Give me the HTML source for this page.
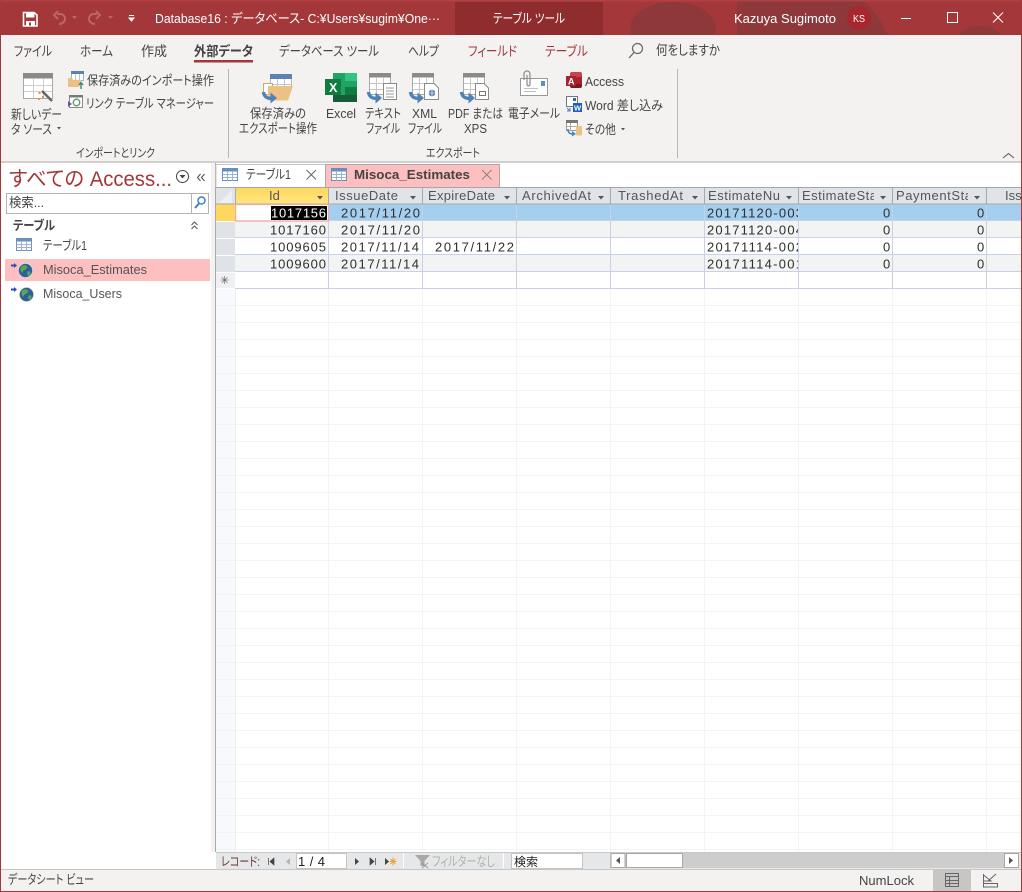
<!DOCTYPE html>
<html lang="ja"><head><meta charset="utf-8"><title>Database16</title>
<style>
html,body{margin:0;padding:0;background:#fff;overflow:hidden}
svg{display:block}
text{font-family:"Liberation Sans","Noto Sans CJK JP",sans-serif;font-size:12px;fill:#444;white-space:pre;font-feature-settings:"palt"}
.t{font-size:13.5px;fill:#444}
.w{fill:#fff;font-size:13px}
.s{font-size:12.8px;fill:#444}
.h{font-size:13px;fill:#555}
.d{font-size:13px;fill:#2e2e2e}
.r{fill:#a4373a}
</style></head><body>
<svg width="1022" height="892" viewBox="0 0 1022 892" xmlns="http://www.w3.org/2000/svg">
<defs>
<pattern id="fg" patternUnits="userSpaceOnUse" x="235" y="289" width="94" height="17"><rect width="94" height="17" fill="#fff"/><path d="M0 16.5H94M93.5 0V17" stroke="#f4f4f5"/></pattern>
<pattern id="fs" patternUnits="userSpaceOnUse" x="216" y="289" width="19" height="17"><rect width="19" height="17" fill="#f8f9fc"/><path d="M0 16.5H19" stroke="#f1f3f8"/></pattern>
<g id="tb"><rect x=".5" y=".5" width="15" height="12" fill="#fff" stroke="#6a8fbd"/><rect x="0" y="0" width="16" height="3.5" fill="#6a8fbd"/><path d="M0.5 6.5H15.5M0.5 9.5H15.5M5.5 3V13M10.5 3V13" stroke="#9ab3d3" fill="none"/></g>
<g id="gt"><rect x=".5" y=".5" width="29" height="25" fill="#fff" stroke="#a8a8a8"/><rect width="30" height="5.5" fill="#8a8a8a"/><path d="M1 12.500H29M1 18.500H29M10.500 6V25M20.500 6V25" stroke="#cfcfcf" fill="none"/></g>
<g id="gs"><rect x=".5" y=".5" width="21" height="21" fill="#fff" stroke="#a8a8a8"/><rect width="22" height="4.500" fill="#8a8a8a"/><path d="M1 10.500H21M1 16.500H21M7.500 5V22M14.500 5V22" stroke="#c8c8c8" fill="none"/></g>
<g id="ar"><path d="M1.500 1C2 6 6 8 10 7" fill="none" stroke="#4d82b8" stroke-width="3.400"/><path d="M8.500 1.500L15 7L8.500 12.500Z" fill="#4d82b8"/></g>
<g id="gl"><circle cx="7.500" cy="7.500" r="7.300" fill="#2f5f9a"/><path d="M3 3.500C6 1 10 2.500 9 5C8 7.500 5 6 4.500 10C2.500 9 2 6 3 3.500Z M9.500 8.500C12.500 7.500 13.500 9.500 11.500 12.500C9.500 13.500 8.500 10.500 9.500 8.500Z" fill="#5aa84e"/><circle cx="7.500" cy="7.500" r="7.100" fill="none" stroke="#dfe6ee" stroke-width=".7"/></g>
<linearGradient id="yl" x1="0" y1="0" x2="0" y2="1"><stop offset="0" stop-color="#ffd75e"/><stop offset="1" stop-color="#ffe682"/></linearGradient>
</defs>

<!-- title bar -->
<rect width="1022" height="892" fill="#fff"/>
<rect width="1022" height="35" fill="#a4373a"/>
<g fill="#8e383b"><ellipse cx="673" cy="28" rx="43" ry="26"/><path d="M737 0H860C875 6 880 22 888 35H737Z"/><ellipse cx="980" cy="36" rx="20" ry="10"/></g>
<rect x="455" y="2" width="148" height="33" fill="#8f2c2e"/>
<rect y="0" width="1022" height="1.5" fill="#b04043"/>
<!-- save -->
<path d="M23.500 12.500H34L37 15V26H23.500Z" fill="none" stroke="#fff" stroke-width="1.600"/>
<rect x="26" y="13" width="8.500" height="4.500" fill="#fff"/><rect x="26" y="21" width="9" height="5" fill="#fff"/><rect x="29" y="22.500" width="2" height="3" fill="#a4373a"/>
<g fill="none" stroke="#bd6567" stroke-width="2"><path d="M57 14H60C64 14 65 17 65 19C65 22 62 24 59 24"/><path d="M58 11L54 15L58 19"/><path d="M97 14H94C90 14 89 17 89 19C89 22 92 24 95 24"/><path d="M96 11L100 15L96 19"/></g>
<path d="M72 16H77L74.500 19Z M108 16H113L110.500 19Z" fill="#bd6567"/>
<path d="M129 15.500H134M129 18H134L131.500 21Z" stroke="#fff" fill="#fff"/>
<text x="155" y="23" class="w" textLength="285" lengthAdjust="spacingAndGlyphs">Database16 : データベース- C:¥Users¥sugim¥One···</text>
<text x="493" y="23" class="w" textLength="72" lengthAdjust="spacingAndGlyphs">テーブル ツール</text>
<text x="734" y="23" class="w" textLength="102" lengthAdjust="spacingAndGlyphs">Kazuya Sugimoto</text>
<circle cx="859" cy="18" r="12" fill="#a8262e"/>
<text x="853" y="22" textLength="12" lengthAdjust="spacingAndGlyphs" style="font-size:10px;fill:#fff">KS</text>
<path d="M901 18.500H911" stroke="#fff"/><rect x="947.500" y="12.500" width="10" height="10" fill="none" stroke="#fff"/><path d="M993 12.500L1003 22.500M1003 12.500L993 22.500" stroke="#fff" fill="none"/>

<!-- ribbon -->
<rect x="1" y="35" width="1020" height="127" fill="#f3f2f1"/>
<rect x="1" y="161" width="1020" height="2" fill="#d2d0ce"/>
<text class="t" x="14" y="56" textLength="38" lengthAdjust="spacingAndGlyphs">ファイル</text>
<text class="t" x="80" y="56" textLength="33" lengthAdjust="spacingAndGlyphs">ホーム</text>
<text class="t" x="141" y="56" textLength="26" lengthAdjust="spacingAndGlyphs">作成</text>
<text class="t" x="194" y="56" textLength="59" lengthAdjust="spacingAndGlyphs" style="font-weight:700">外部データ</text>
<rect x="194" y="60" width="59" height="2.500" fill="#a4373a"/>
<text class="t" x="279" y="56" textLength="100" lengthAdjust="spacingAndGlyphs">データベース ツール</text>
<text class="t" x="408" y="56" textLength="31" lengthAdjust="spacingAndGlyphs">ヘルプ</text>
<text class="t r" x="468" y="56" textLength="49" lengthAdjust="spacingAndGlyphs">フィールド</text>
<text class="t r" x="545" y="56" textLength="43" lengthAdjust="spacingAndGlyphs">テーブル</text>
<circle cx="637.500" cy="48.500" r="5" fill="none" stroke="#666" stroke-width="1.200"/><path d="M634 52.500L629 58" stroke="#666" stroke-width="1.300"/>
<text class="t" x="656" y="55" textLength="64" lengthAdjust="spacingAndGlyphs">何をしますか</text>

<!-- new data source -->
<use href="#gt" x="23" y="73"/>
<path d="M41 90L52 101" stroke="#666" stroke-width="2.600"/><path d="M39 88L42 91" stroke="#fff" stroke-width="3"/><path d="M38.500 92h2v2h-2zM42 96h2v2h-2zM38 98h2v2h-2z" fill="#e8913a"/>
<text class="s" x="11" y="119" textLength="51" lengthAdjust="spacingAndGlyphs">新しいデー</text>
<text class="s" x="11" y="134" textLength="41" lengthAdjust="spacingAndGlyphs">タ ソース</text>
<path d="M57 127H61L59 129.500Z" fill="#555"/>
<!-- import saved -->
<rect x="71.500" y="71.500" width="12" height="9" fill="#fff" stroke="#9ab3d3"/><rect x="71" y="71" width="13" height="3" fill="#5b82b5"/><path d="M75.500 74V80M79.500 74V80" stroke="#c0c0c0"/>
<path d="M68 78H72L73 80H81L79 87H68Z" fill="#ecc185"/><path d="M81 89V83M79 85L81 82.500L83 85" stroke="#3c8a6a" fill="none" stroke-width="1.400"/>
<text class="s" x="87" y="85" textLength="127" lengthAdjust="spacingAndGlyphs">保存済みのインポート操作</text>
<rect x="69.500" y="95.500" width="13" height="12" fill="#fff" stroke="#8a8a8a"/><rect x="69" y="95" width="14" height="2.500" fill="#7a7a7a"/><path d="M68 101L72 104L68 107Z" fill="#7a4fa8"/><circle cx="76.500" cy="102.500" r="3.300" fill="none" stroke="#4d9a6a" stroke-width="1.300"/>
<text class="s" x="86" y="108" textLength="128" lengthAdjust="spacingAndGlyphs">リンク テーブル マネージャー</text>
<text x="76" y="157" textLength="79" lengthAdjust="spacingAndGlyphs" style="font-size:12px">インポートとリンク</text>
<rect x="228" y="69" width="1" height="89" fill="#b9b7b5"/>

<!-- saved export -->
<rect x="270.500" y="74.500" width="21" height="15" fill="#fff" stroke="#b8b8b8"/><rect x="270" y="74" width="22" height="5" fill="#5b82b5"/><path d="M277.500 79V90M284.500 79V90M271 84.500H291" stroke="#c4c4c4"/>
<rect x="263.500" y="83.500" width="9" height="11" fill="#fff" stroke="#cfa76a"/>
<path d="M268 86H293L288 100.500H268Z" fill="#ecc185"/>
<use href="#ar" x="262" y="91"/>
<text class="s" x="250" y="118" textLength="56" lengthAdjust="spacingAndGlyphs">保存済みの</text>
<text class="s" x="239" y="133" textLength="78" lengthAdjust="spacingAndGlyphs">エクスポート操作</text>
<!-- excel -->
<rect x="333" y="73" width="24" height="29" fill="#21a366"/><rect x="345" y="73" width="12" height="8" fill="#33c481"/><rect x="345" y="87" width="12" height="8" fill="#107c41"/><rect x="333" y="95" width="24" height="7" fill="#185c37"/>
<rect x="325" y="79" width="16" height="16" fill="#107c41"/>
<text x="329" y="92" style="font-size:12.500px;font-weight:700;fill:#fff">X</text>
<text class="s" x="326" y="118" textLength="30" lengthAdjust="spacingAndGlyphs">Excel</text>
<!-- text -->
<use href="#gs" x="369" y="73"/>
<rect x="383.500" y="83.500" width="13" height="16" fill="#fff" stroke="#8a8a8a"/><path d="M386 88H394M386 91H394M386 94H394M386 97H394" stroke="#999"/>
<use href="#ar" x="367" y="91"/>
<text class="s" x="365" y="118" textLength="36" lengthAdjust="spacingAndGlyphs">テキスト</text>
<text class="s" x="366" y="133" textLength="34" lengthAdjust="spacingAndGlyphs">ファイル</text>
<!-- xml -->
<use href="#gs" x="412" y="73"/>
<path d="M424.500 83.500H434L438.500 88V99.500H424.500Z" fill="#fff" stroke="#8a8a8a"/><circle cx="432" cy="93" r="3.300" fill="#5b82b5"/><path d="M428.700 93H435.300M432 89.700V96.300" stroke="#fff" stroke-width=".6"/>
<use href="#ar" x="409" y="91"/>
<text class="s" x="412" y="118" textLength="25" lengthAdjust="spacingAndGlyphs">XML</text>
<text class="s" x="408" y="133" textLength="34" lengthAdjust="spacingAndGlyphs">ファイル</text>
<!-- pdf -->
<use href="#gs" x="463" y="73"/>
<path d="M475.500 83.500H484L488.500 88V99.500H475.500Z" fill="#fff" stroke="#8a8a8a"/><rect x="479.500" y="91.500" width="6" height="4" fill="none" stroke="#777"/>
<use href="#ar" x="460" y="91"/>
<text class="s" x="448" y="118" textLength="55" lengthAdjust="spacingAndGlyphs">PDF または</text>
<text class="s" x="464" y="133" textLength="23" lengthAdjust="spacingAndGlyphs">XPS</text>
<!-- mail -->
<rect x="520.500" y="78.500" width="27" height="17" fill="#fff" stroke="#999"/><rect x="541" y="81" width="4" height="5" fill="#5b8fc9"/><path d="M524 88.500H538M524 91.500H536" stroke="#c0c0c0"/>
<path d="M524 80V74C524 70 530 70 530 74V84C530 86.500 527 86.500 527 84V75" fill="none" stroke="#8a8a8a" stroke-width="1.200"/>
<text class="s" x="508" y="118" textLength="52" lengthAdjust="spacingAndGlyphs">電子メール</text>
<!-- access -->
<path d="M570 74C572 71.500 580 71.500 582 74V86C580 88.500 572 88.500 570 86Z" fill="#a4262c"/><rect x="570" y="72" width="12" height="5" rx="2" fill="#c8434a"/><rect x="570" y="84" width="12" height="4" rx="2" fill="#7a1a20"/><rect x="566" y="76" width="10" height="10" fill="#a4262c"/>
<text x="568" y="84.500" style="font-size:9px;font-weight:700;fill:#fff">A</text>
<text class="s" x="585" y="86" textLength="39" lengthAdjust="spacingAndGlyphs">Access</text>
<!-- word -->
<rect x="566.500" y="96.500" width="11" height="10" fill="#fff" stroke="#777"/><rect x="573" y="98" width="3" height="3" fill="#2b6cb8"/>
<rect x="573" y="103" width="9" height="9" fill="#1f5fbf"/><text x="574" y="110.500" style="font-size:7.500px;font-weight:700;fill:#fff">W</text>
<path d="M567 108L570 111M567 111H570V108" stroke="#4d82b8" fill="none"/>
<text class="s" x="585" y="110" textLength="78" lengthAdjust="spacingAndGlyphs">Word 差し込み</text>
<!-- other -->
<rect x="566.500" y="120.500" width="11" height="10" fill="#fff" stroke="#999"/><rect x="566" y="120" width="12" height="3" fill="#777"/><path d="M570.500 123V131M566.500 126.500H577" stroke="#aaa"/><rect x="576" y="126" width="6" height="9.500" rx="1" fill="#ecc185"/>
<path d="M568 129C568 133 570 134 573 134" fill="none" stroke="#4d82b8" stroke-width="1.600"/><path d="M572 131L576 134L572 136.500Z" fill="#4d82b8"/>
<text class="s" x="585" y="134" textLength="31" lengthAdjust="spacingAndGlyphs">その他</text>
<path d="M621 128H625L623 130.500Z" fill="#555"/>
<text x="426" y="157" textLength="54" lengthAdjust="spacingAndGlyphs" style="font-size:12px">エクスポート</text>
<rect x="677" y="69" width="1" height="89" fill="#b9b7b5"/>
<path d="M1003 158L1008.500 153.500L1014 158" fill="none" stroke="#555"/>

<!-- nav pane -->
<rect x="211" y="163" width="4" height="689" fill="#f3f2f1"/>
<rect x="215" y="163" width="1" height="689" fill="#a8a8a8"/>
<text class="r" x="9" y="186" textLength="163" lengthAdjust="spacingAndGlyphs" style="font-size:21px">すべての Access...</text>
<circle cx="182.500" cy="176.500" r="6" fill="none" stroke="#444" stroke-width="1"/><path d="M179.500 175H185.500L182.500 178.500Z" fill="#444"/>
<path d="M200.500 174L197.500 177.500L200.500 181M204.500 174L201.500 177.500L204.500 181" fill="none" stroke="#555" stroke-width="1.100"/>
<rect x="6.500" y="193.500" width="202" height="20" fill="#fff" stroke="#b3b3b3"/><path d="M191.500 194V213" stroke="#b3b3b3"/>
<text class="s" x="9" y="207" textLength="35" lengthAdjust="spacingAndGlyphs">検索...</text>
<circle cx="201.500" cy="200.500" r="3.500" fill="none" stroke="#3f7fc0" stroke-width="1.500"/><path d="M199 203.500L195 208" stroke="#3f7fc0" stroke-width="2"/>
<text class="s" x="13" y="230" textLength="42" lengthAdjust="spacingAndGlyphs" style="font-weight:700">テーブル</text>
<path d="M191.500 225L194.500 222L197.500 225M191.500 229L194.500 226L197.500 229" fill="none" stroke="#555"/>
<use href="#tb" x="16" y="238"/>
<text class="s" x="43" y="250" textLength="44" lengthAdjust="spacingAndGlyphs">テーブル1</text>
<rect x="5" y="259" width="205" height="22" fill="#fdbfbf"/>
<path d="M11 265.500L14 263V264.500H17V266.500H14V268Z" transform="rotate(180 14 265.500)" fill="#2b4fb8"/>
<use href="#gl" x="18" y="263"/>
<text x="43" y="274" textLength="104" lengthAdjust="spacingAndGlyphs" style="font-size:12.500px;fill:#555">Misoca_Estimates</text>
<path d="M11 289.500L14 287V288.500H17V290.500H14V292Z" transform="rotate(180 14 289.500)" fill="#2b4fb8"/>
<use href="#gl" x="19" y="287"/>
<text x="43" y="298" textLength="79" lengthAdjust="spacingAndGlyphs" style="font-size:12.500px;fill:#555">Misoca_Users</text>

<!-- doc tabs -->
<rect x="216" y="164" width="109" height="23" fill="#fff"/>
<path d="M216 187V164.500H325" fill="none" stroke="#c8c8c8"/>
<use href="#tb" x="222" y="168"/>
<text class="s" x="246" y="179" textLength="45" lengthAdjust="spacingAndGlyphs">テーブル1</text>
<path d="M306.500 170L316 179.500M316 170L306.500 179.500" stroke="#666" fill="none"/>
<rect x="325" y="164" width="174" height="23" fill="#fdbfbf"/>
<path d="M325.500 187V164.500H499.500V187" fill="none" stroke="#a8a8a8"/>
<use href="#tb" x="331" y="168"/>
<text x="354" y="179" textLength="116" lengthAdjust="spacingAndGlyphs" style="font-size:13px;font-weight:700;fill:#444">Misoca_Estimates</text>
<path d="M482 170L491.500 179.500M491.500 170L482 179.500" stroke="#888" fill="none"/>

<!-- grid background -->
<rect x="235" y="289" width="786" height="563" fill="url(#fg)"/>
<rect x="216" y="289" width="19" height="563" fill="url(#fs)"/>
<path d="M235.500 289V852" stroke="#eceef4"/>
<!-- header -->
<rect x="216" y="187" width="805" height="17" fill="#e0e3e8"/>
<rect x="216" y="187" width="805" height="1" fill="#a6a6a6"/>
<path d="M219 203L232 190V203Z" fill="#edeff2"/>
<rect x="235" y="188" width="93" height="16" fill="url(#yl)"/>
<!-- rows -->
<rect x="235" y="204" width="786" height="17" fill="#a5cfef"/>
<rect x="235" y="221" width="786" height="17" fill="#f2f3f3"/>
<rect x="235" y="238" width="786" height="17" fill="#fff"/>
<rect x="235" y="255" width="786" height="17" fill="#f2f3f3"/>
<rect x="235" y="272" width="786" height="17" fill="#fff"/>
<rect x="216" y="204" width="19" height="17" fill="#ffd75e"/>
<rect x="216" y="221" width="19" height="68" fill="#dfe3e8"/>
<rect x="216" y="272" width="19" height="17" fill="#eef0f3"/>
<path d="M216 221.500H235M216 238.500H235M216 255.500H235M216 272.500H235M216 288.500H235" stroke="#fff"/>
<path d="M235 220.500H1021M235 237.500H1021M235 254.500H1021M235 271.500H1021M235 288.500H1021" stroke="#c8d2e2"/>
<path d="M328.500 204V289M422.500 204V289M516.500 204V289M610.500 204V289M704.500 204V289M798.500 204V289M892.500 204V289M986.500 204V289" stroke="#c8d2e2"/>
<path d="M235.500 188V204M328.500 188V204M422.500 188V204M516.500 188V204M610.500 188V204M704.500 188V204M798.500 188V204M892.500 188V204M986.500 188V204" stroke="#a6a8ac"/>
<path d="M216 204H1021" stroke="#a6a8ac" stroke-width="1"/>
<rect x="235" y="204" width="94" height="17" fill="#fff"/><rect x="235.500" y="204.500" width="93" height="16.500" fill="none" stroke="#f2a8a8" stroke-width="1.300"/>
<rect x="271" y="206" width="56" height="14" fill="#000"/>
<text x="220" y="284" style="font-size:11px;fill:#555">✳</text>
<!-- header text -->
<text class="h" x="269" y="200">Id</text>
<text class="h" x="335" y="200" textLength="63">IssueDate</text>
<text class="h" x="428" y="200" textLength="67">ExpireDate</text>
<text class="h" x="522" y="200" textLength="69">ArchivedAt</text>
<text class="h" x="618" y="200" textLength="65">TrashedAt</text>
<text class="h" x="708" y="200" textLength="72">EstimateNu</text>
<svg x="799" y="188" width="75" height="16"><text class="h" x="3" y="12" textLength="75">EstimateSta</text></svg>
<svg x="893" y="188" width="75" height="16"><text class="h" x="3" y="12" textLength="76">PaymentSta</text></svg>
<text class="h" x="1005" y="200">Issue</text>
<path d="M317 196H323L320 199.500Z M410 196H416L413 199.500Z M504 196H510L507 199.500Z M598 196H604L601 199.500Z M692 196H698L695 199.500Z M786 196H792L789 199.500Z M880 196H886L883 199.500Z M974 196H980L977 199.500Z" fill="#555"/>
<!-- data -->
<text class="d" x="271" y="217.500" textLength="55" lengthAdjust="spacing" style="fill:#fff">1017156</text>
<text class="d" x="270" y="234.500" textLength="56" lengthAdjust="spacing">1017160</text>
<text class="d" x="270" y="251.500" textLength="56" lengthAdjust="spacing">1009605</text>
<text class="d" x="270" y="268.500" textLength="56" lengthAdjust="spacing">1009600</text>
<text class="d" x="341" y="217.500" textLength="79" lengthAdjust="spacing">2017/11/20</text>
<text class="d" x="341" y="234.500" textLength="79" lengthAdjust="spacing">2017/11/20</text>
<text class="d" x="341" y="251.500" textLength="78" lengthAdjust="spacing">2017/11/14</text>
<text class="d" x="341" y="268.500" textLength="78" lengthAdjust="spacing">2017/11/14</text>
<text class="d" x="435" y="251.500" textLength="79" lengthAdjust="spacing">2017/11/22</text>
<svg x="705" y="204" width="93" height="17"><text class="d" x="2" y="13.500" textLength="96" lengthAdjust="spacing">20171120-003</text></svg>
<svg x="705" y="221" width="93" height="17"><text class="d" x="2" y="13.500" textLength="96" lengthAdjust="spacing">20171120-004</text></svg>
<svg x="705" y="238" width="93" height="17"><text class="d" x="2" y="13.500" textLength="96" lengthAdjust="spacing">20171114-002</text></svg>
<svg x="705" y="255" width="93" height="17"><text class="d" x="2" y="13.500" textLength="96" lengthAdjust="spacing">20171114-001</text></svg>
<g>
<text class="d" x="883" y="217.500">0</text><text class="d" x="883" y="234.500">0</text><text class="d" x="883" y="251.500">0</text><text class="d" x="883" y="268.500">0</text>
<text class="d" x="977" y="217.500">0</text><text class="d" x="977" y="234.500">0</text><text class="d" x="977" y="251.500">0</text><text class="d" x="977" y="268.500">0</text>
</g>

<!-- record bar -->
<rect x="216" y="852" width="805" height="17" fill="#e6e7e8"/>
<rect x="216" y="852" width="805" height="1" fill="#c8c8c8"/>
<text x="221" y="866" textLength="39" lengthAdjust="spacingAndGlyphs" style="font-size:12.500px;fill:#6a3a3a">レコード:</text>
<path d="M268.500 858V865M274 858L270 861.500L274 865Z" stroke="#444" fill="#444" stroke-width=".7"/>
<path d="M290 858L286 861.500L290 865Z" fill="#b4b4b4"/>
<rect x="296.500" y="853.500" width="50" height="15" fill="#fff" stroke="#c4c4c4"/>
<text x="298" y="866" textLength="27" lengthAdjust="spacing" style="font-size:13px;fill:#222">1 / 4</text>
<path d="M355 858L359 861.500L355 865Z" fill="#444"/>
<path d="M370 858L374 861.500L370 865Z M375.500 858V865" stroke="#444" fill="#444" stroke-width=".7"/>
<path d="M385 858L389 861.500L385 865Z" fill="#444"/>
<path d="M393 857.500V865.500M389.500 861.500H396.500M390.500 859L395.500 864M395.500 859L390.500 864" stroke="#e8a33a"/>
<rect x="403" y="853" width="1" height="15" fill="#fff"/>
<path d="M415 855H430L424.500 861V866H420.500V861Z" fill="#a8a8a8"/><path d="M422 863L428 868M428 863L422 868" stroke="#999"/>
<text x="432" y="866" textLength="63" lengthAdjust="spacingAndGlyphs" style="font-size:12.800px;fill:#b0b0b0">フィルターなし</text>
<rect x="503" y="853" width="1" height="15" fill="#fff"/>
<rect x="511.500" y="853.500" width="71" height="15" fill="#fff" stroke="#c4c4c4"/>
<text x="514" y="866" textLength="24" lengthAdjust="spacingAndGlyphs" style="font-size:12px;fill:#222">検索</text>
<rect x="610" y="853" width="408" height="15" fill="#cdcdcd"/>
<rect x="611" y="853.500" width="14" height="14" fill="#fff" stroke="#a8a8a8"/><path d="M620 857L616 860.500L620 864Z" fill="#555"/>
<rect x="626.500" y="853.500" width="56" height="14" fill="#fff" stroke="#a8a8a8"/>
<rect x="1004.500" y="853.500" width="14" height="14" fill="#fff" stroke="#a8a8a8"/><path d="M1009 857L1013 860.500L1009 864Z" fill="#555"/>

<!-- status bar -->
<rect x="1" y="869" width="1020" height="22" fill="#f3f2f1"/>
<rect x="1" y="869" width="1020" height="1" fill="#c8c6c4"/>
<text x="8" y="884" textLength="86" lengthAdjust="spacingAndGlyphs" style="font-size:12.800px;fill:#444">データシート ビュー</text>
<text x="859" y="885" textLength="55" lengthAdjust="spacingAndGlyphs" style="font-size:13px;fill:#444">NumLock</text>
<rect x="933" y="870" width="38" height="21" fill="#c8c6c4"/>
<rect x="945.500" y="873.500" width="13" height="13" fill="none" stroke="#666"/><path d="M945.500 876.500H958.500M945.500 880.500H958.500M945.500 883.500H958.500M949.500 876.500V886.500" stroke="#666" fill="none"/>
<path d="M983.500 874V883.500H997.500V887H983.500V883.500" fill="none" stroke="#666"/><path d="M983.500 875L991 881H983.500M988 881L996 874" fill="none" stroke="#666"/>

<!-- window border -->
<rect x="0" y="0" width="1" height="892" fill="#a4373a"/>
<rect x="1021" y="0" width="1" height="892" fill="#a4373a"/>
<rect x="0" y="891" width="1022" height="1" fill="#a4373a"/>
</svg>
</body></html>
